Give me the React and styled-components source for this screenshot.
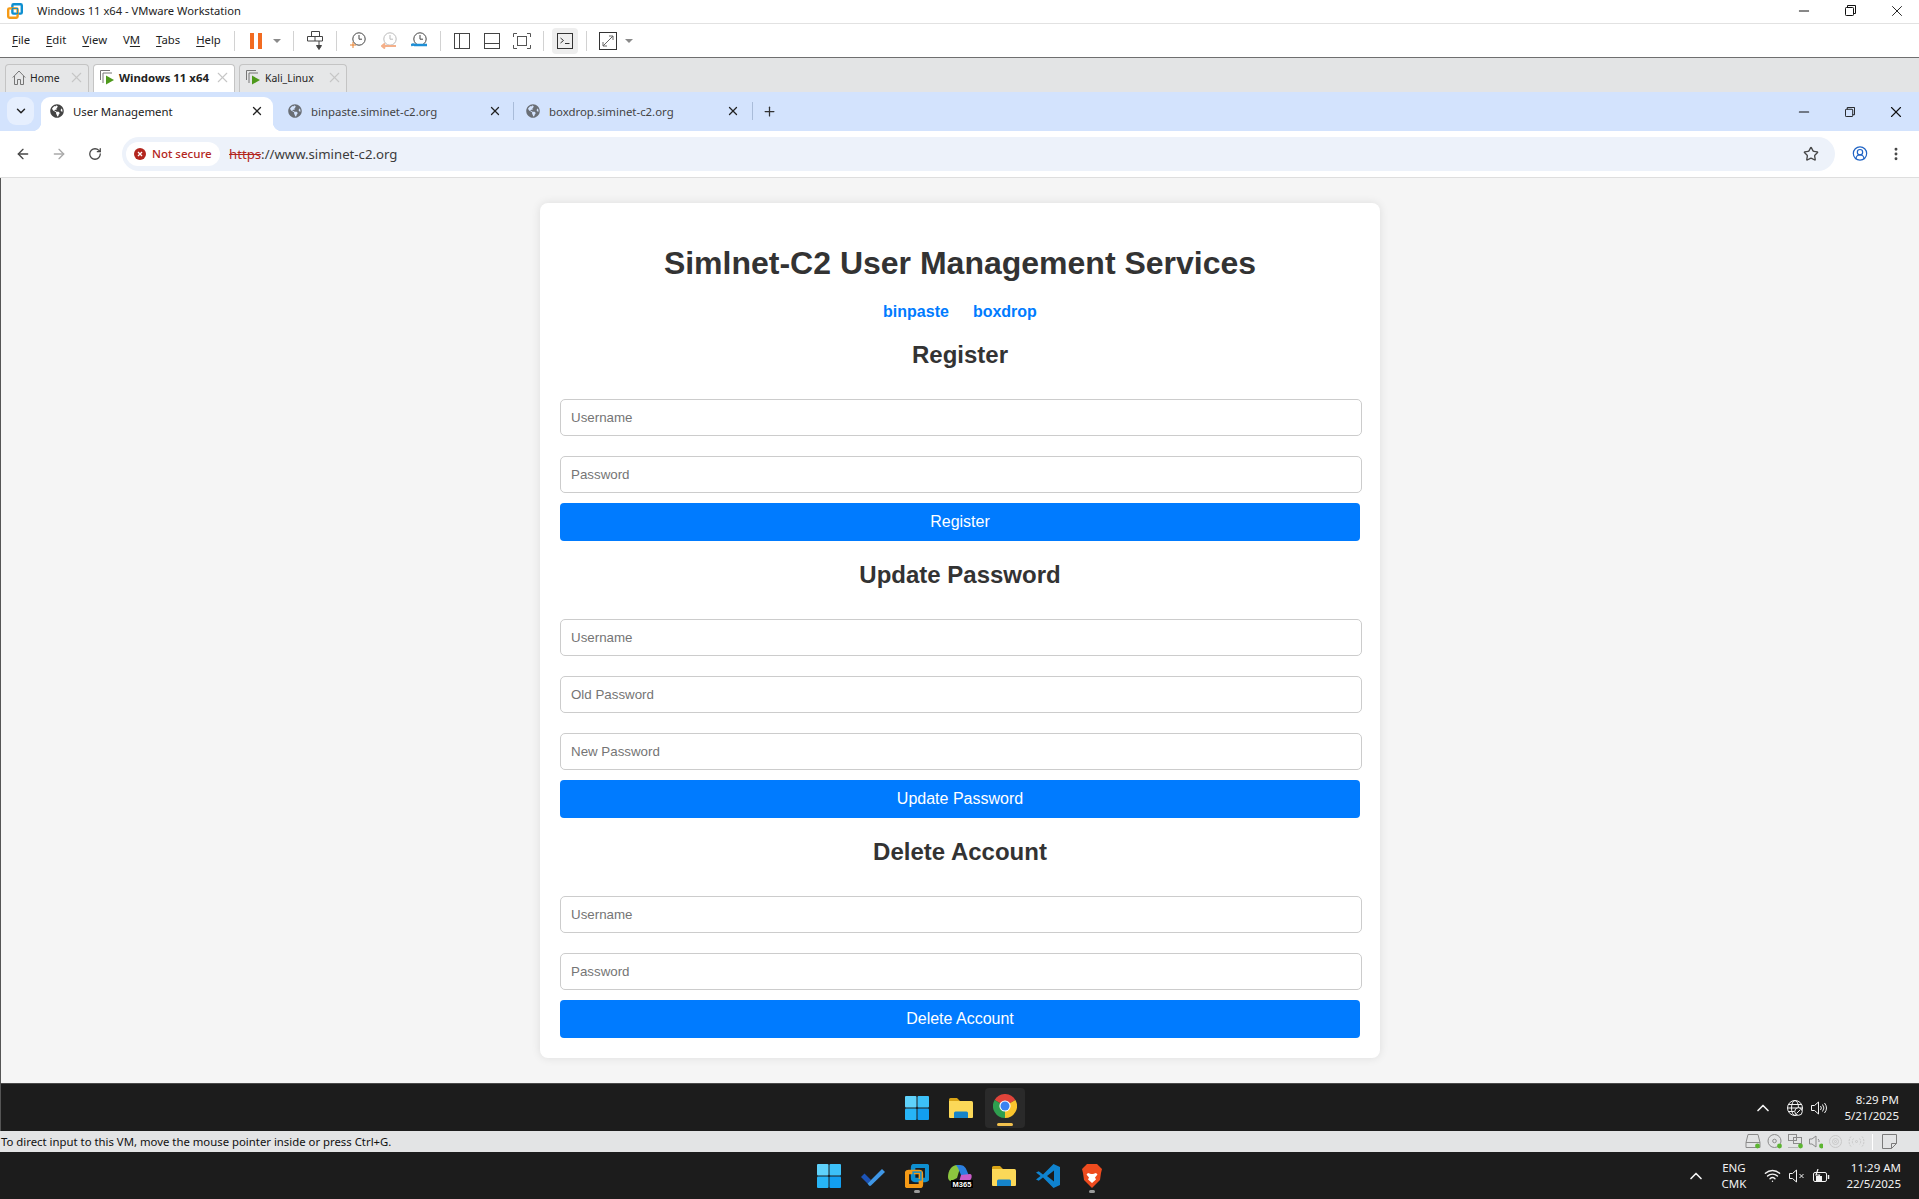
import React from 'react';
import styled, { createGlobalStyle } from 'styled-components';
import { ArrowLeft, ArrowRight, RotateCw, Star, X, Plus, ChevronDown, ChevronUp, CircleUserRound, MoreVertical, Wifi, Minus } from 'lucide-react';
import { FaGlobeAmericas } from 'react-icons/fa';

const UI_FONT = '"Noto Sans", "Open Sans", "Liberation Sans", sans-serif';
const WEB_FONT = '"Liberation Sans", Arial, sans-serif';

const GlobalStyle = createGlobalStyle`
  html, body { margin: 0; padding: 0; background: #fff; }
  * { box-sizing: border-box; }
  #root { width: 1919px; height: 1199px; overflow: hidden; }
`;

const Screen = styled.div`
  width: 1919px;
  height: 1199px;
  display: flex;
  flex-direction: column;
  font-family: ${UI_FONT};
  color: #1a1a1a;
`;

/* VMware window chrome */
const TitleBar = styled.div`
  height: 24px;
  flex: none;
  display: flex;
  align-items: center;
  padding: 0 0 2px 7px;
  border-bottom: 1px solid #e2e2e2;
  font-size: 11.2px;
`;
const TitleText = styled.span`
  margin-left: 14px;
  color: #222;
`;
const WinControls = styled.div`
  margin-left: auto;
  width: 123px;
  display: flex;
  align-items: center;
  justify-content: space-between;
  padding-right: 13px;
  color: ${p => p.$color || '#111'};
`;
const ChromeControls = styled(WinControls)`
  align-self: center;
  padding-right: 14px;
`;
const MenuBar = styled.div`
  height: 34px;
  flex: none;
  display: flex;
  align-items: center;
  border-bottom: 1px solid #6f6f6f;
  background: #fff;
`;
const MenuList = styled.div`
  width: 222px;
  padding: 0 0 2px 12px;
  display: flex;
  gap: 16px;
  font-size: 11.3px;
  color: #222;
  u { text-underline-offset: 2px; }
`;
const ToolSep = styled.span`
  width: 1px;
  height: 20px;
  background: #d2d2d2;
  margin-left: ${p => p.$ml}px;
`;
const Tool = styled.span`
  display: flex;
  align-items: center;
  justify-content: center;
  margin-left: ${p => p.$ml}px;
`;
const ActiveTool = styled(Tool)`
  width: 26px;
  height: 26px;
  background: #eeeeee;
  border-radius: 4px;
`;
const Caret = styled.span`
  width: 0;
  height: 0;
  margin-left: ${p => p.$ml}px;
  border-left: 4px solid transparent;
  border-right: 4px solid transparent;
  border-top: 4px solid #8a8a8a;
`;
const VmTabs = styled.div`
  height: 34px;
  flex: none;
  display: flex;
  align-items: flex-end;
  background: #e3e4e5;
  padding-left: 5px;
  gap: 4px;
`;
const VmTab = styled.div`
  height: 28px;
  width: ${p => p.$w}px;
  display: flex;
  align-items: center;
  padding: 0 3px 2px 6px;
  border: 1px solid #c4c4c4;
  border-bottom: none;
  border-radius: 4px 4px 0 0;
  background: ${p => (p.$active ? '#fff' : '#e6e7e8')};
  font-size: ${p => (p.$active ? 11.4 : 10.4)}px;
  font-weight: ${p => (p.$active ? 700 : 400)};
  color: #222;
`;
const VmTabLabel = styled.span`
  margin-left: 4px;
  white-space: nowrap;
`;
const VmTabClose = styled(X)`
  margin-left: auto;
  color: #c6c6c6;
`;

/* Chrome */
const ChromeStrip = styled.div`
  height: 39px;
  flex: none;
  display: flex;
  align-items: flex-end;
  background: #d3e3fd;
  color: #222;
`;
const SearchTabs = styled.div`
  width: 27px;
  height: 28px;
  margin: 0 7px 6px 7px;
  border-radius: 9px;
  background: #e6effe;
  display: flex;
  align-items: center;
  justify-content: center;
`;
const ChromeTab = styled.div`
  position: relative;
  height: 34px;
  width: ${p => p.$w}px;
  display: flex;
  align-items: center;
  padding: 0 ${p => p.$pr}px 6px ${p => p.$pl}px;
  font-size: 11.4px;
  color: ${p => (p.$active ? '#222' : '#444')};
  background: ${p => (p.$active ? '#fff' : 'transparent')};
  border-radius: 9px 9px 0 0;
  svg.favicon { color: ${p => (p.$active ? '#444' : '#6a6f76')}; flex: none; }
  ${p => p.$sep && `
    &::before, &::after {
      content: '';
      position: absolute;
      top: 5px;
      width: 1px;
      height: 18px;
      background: #a9bcd9;
    }
    &::before { left: 0; }
    &::after { right: 0; }
  `}
  ${p => p.$active && `
    &::before, &::after {
      content: '';
      position: absolute;
      bottom: 0;
      width: 9px;
      height: 9px;
    }
    &::before { left: -9px; background: radial-gradient(circle at 0 0, transparent 9px, #fff 9.5px); }
    &::after { right: -9px; background: radial-gradient(circle at 100% 0, transparent 9px, #fff 9.5px); }
  `}
`;
const ChromeTabLabel = styled.span`
  margin-left: 9px;
  white-space: nowrap;
`;
const ChromeTabClose = styled(X)`
  margin-left: auto;
  color: #222;
`;
const NewTab = styled(Plus)`
  margin: 0 0 12px 9px;
  color: #333;
`;
const AddressBar = styled.div`
  height: 47px;
  flex: none;
  display: flex;
  align-items: center;
  background: #fff;
  border-bottom: 1px solid #dedede;
  padding-bottom: 1px;
  color: #474747;
`;
const NavButton = styled.span`
  width: 16px;
  display: flex;
  justify-content: center;
  margin-left: ${p => p.$ml}px;
  color: ${p => p.$color || '#474747'};
`;
const Omnibox = styled.div`
  width: 1713px;
  height: 34px;
  margin-left: 19px;
  display: flex;
  align-items: center;
  padding-left: 4px;
  border-radius: 17px;
  background: #edf2fa;
  font-size: 13.2px;
`;
const SecurityChip = styled.div`
  width: 94px;
  height: 24px;
  display: flex;
  align-items: center;
  padding-left: 8px;
  gap: 6px;
  border-radius: 12px;
  background: #fff;
  color: #b3261e;
  font-size: 11.5px;
  font-weight: 500;
`;
const Url = styled.span`
  margin-left: 9px;
  color: #3c3c3c;
`;
const Scheme = styled.span`
  color: #b3261e;
  text-decoration: line-through;
`;
const OmniStar = styled(Star)`
  margin-left: auto;
  margin-right: 16px;
  color: #474747;
`;

/* The web page in the VM */
const Page = styled.main`
  flex: 1;
  min-height: 0;
  display: flex;
  align-items: center;
  justify-content: center;
  background: #f5f5f5;
  border-left: 1px solid #555;
  font-family: ${WEB_FONT};
`;
const Card = styled.div`
  width: 840px;
  padding: 20px;
  background: #fff;
  border-radius: 8px;
  box-shadow: 0 0 10px rgba(0, 0, 0, 0.1);
`;
const PageTitle = styled.h1`
  margin: 21.44px 0;
  font-size: 32px;
  line-height: 37px;
  text-align: center;
  color: #333;
`;
const LinkRow = styled.nav`
  display: flex;
  justify-content: center;
  gap: 24px;
  line-height: 18px;
`;
const PageLink = styled.a`
  color: #007bff;
  font-size: 16px;
  font-weight: 700;
  text-decoration: none;
`;
const FormSection = styled.section`
  display: flex;
  flex-direction: column;
`;
const SectionTitle = styled.h2`
  margin: 19.92px 0;
  font-size: 24px;
  line-height: 28px;
  text-align: center;
  color: #333;
`;
const Field = styled.input`
  display: block;
  flex: none;
  width: 802px;
  height: 37px;
  margin: 10px 0;
  padding: 10px;
  border: 1px solid #ccc;
  border-radius: 5px;
  font-family: ${WEB_FONT};
  font-size: 13.33px;
  background: #fff;
  &::placeholder { color: #757575; opacity: 1; }
`;
const SubmitButton = styled.button`
  display: block;
  flex: none;
  width: 100%;
  height: 38px;
  padding: 0;
  border: none;
  border-radius: 4px;
  background: #007bff;
  color: #fff;
  font-family: ${WEB_FONT};
  font-size: 16px;
`;

/* Taskbars */
const Taskbar = styled.div`
  height: ${p => p.$h}px;
  flex: none;
  display: flex;
  align-items: center;
  background: #1c1c1c;
  color: #f2f2f2;
  border-top: ${p => (p.$guest ? '1px solid #4a4a4a' : 'none')};
  border-left: ${p => (p.$guest ? '1px solid #555' : 'none')};
`;
const Apps = styled.div`
  margin-left: ${p => p.$ml}px;
  display: flex;
  align-items: center;
`;
const App = styled.span`
  position: relative;
  display: flex;
  align-items: center;
  justify-content: center;
  margin-left: ${p => p.$ml || 0}px;
  ${p => p.$running && `
    &::after {
      content: '';
      position: absolute;
      left: 50%;
      bottom: -5px;
      width: 6px;
      height: 3px;
      margin-left: -3px;
      border-radius: 2px;
      background: #9a9a9a;
    }
  `}
`;
const ActiveApp = styled.span`
  position: relative;
  width: 40px;
  height: 40px;
  margin-left: 12px;
  display: flex;
  align-items: center;
  justify-content: center;
  padding-bottom: 4px;
  background: #2a2a2a;
  border-radius: 4px;
  &::after {
    content: '';
    position: absolute;
    left: 12px;
    bottom: 2px;
    width: 16px;
    height: 3px;
    border-radius: 2px;
    background: #f2c14e;
  }
`;
const Tray = styled.div`
  margin-left: auto;
  display: flex;
  align-items: center;
  padding-right: ${p => p.$pr}px;
`;
const TrayItem = styled.span`
  display: flex;
  align-items: center;
  margin-left: ${p => p.$ml}px;
`;
const ClockText = styled.div`
  margin-left: ${p => p.$ml}px;
  text-align: right;
  font-size: 11.5px;
  line-height: 16px;
  white-space: nowrap;
`;
const LangText = styled(ClockText)`
  text-align: center;
`;
const StatusBar = styled.div`
  height: 21px;
  flex: none;
  display: flex;
  align-items: center;
  padding-left: 1px;
  background: #e3e4e5;
  font-size: 11.35px;
  color: #111;
`;
const StatusIcons = styled.div`
  margin-left: auto;
  padding-right: 22px;
  display: flex;
  align-items: center;
  gap: 6px;
`;
const StatusSep = styled.span`
  width: 1px;
  height: 16px;
  background: #fff;
  margin: 0 3px 0 1px;
`;

/* Drawn icons */
const VmwareLogo = ({ size = 16, stroke = 2.4 }) => (
  <svg width={size} height={size} viewBox="0 0 16 16" fill="none">
    <rect x="5.4" y="1.2" width="9.4" height="9.4" rx="1.2" stroke="#0e8fd0" strokeWidth={stroke} />
    <rect x="1.2" y="5.4" width="9.4" height="9.4" rx="1.2" stroke="#f59a16" strokeWidth={stroke} />
    <rect x="5.4" y="5.4" width="5.2" height="5.2" stroke="#0e8fd0" strokeWidth="1" />
  </svg>
);
const PauseIcon = () => (
  <svg width="12" height="16" viewBox="0 0 12 16"><rect width="4" height="16" fill="#f26b21" /><rect x="8" width="4" height="16" fill="#f26b21" /></svg>
);
const SendKeysIcon = () => (
  <svg width="16" height="19" viewBox="0 0 16 19" fill="none" stroke="#444">
    <path d="M4.5 .5h8v5h-8zM.5 5.500h15v4.500H.5zM8 5.500V10" />
    <path d="M12 10v5" />
    <path d="M14.500 14.500 12 18.500 9.500 14.500z" fill="#444" />
  </svg>
);
const ClockBase = ({ accent, dim }) => (
  <svg width="16" height="17" viewBox="0 0 16 17" fill="none" stroke={dim ? '#bbb' : '#444'}>
    <circle cx="9" cy="7" r="6.200" />
    <path d="M9 3v4.200h3" />
    {accent}
  </svg>
);
const LayoutIcon = ({ d }) => (
  <svg width="16" height="16" viewBox="0 0 16 16" fill="none" stroke="#444">
    <rect x=".5" y=".5" width="15" height="15" />
    <path d={d} />
  </svg>
);
const FocusIcon = () => (
  <svg width="18" height="16" viewBox="0 0 18 16" fill="none" stroke="#555">
    <path d="M.5 4V.5H4M14 .5h3.500V4M17.500 12v3.500H14M4 15.500H.5V12" />
    <rect x="4.500" y="3.500" width="9" height="9" />
  </svg>
);
const TerminalIcon = () => (
  <svg width="16" height="16" viewBox="0 0 16 16" fill="none" stroke="#333">
    <rect x=".5" y=".5" width="15" height="15" />
    <path d="M3.500 5 6.500 7.500 3.500 10M8 10.500h4.500" />
  </svg>
);
const StretchIcon = () => (
  <svg width="18" height="18" viewBox="0 0 18 18" fill="none" stroke="#333">
    <rect x=".5" y=".5" width="17" height="17" />
    <path d="M4 14 14 4M10 4h4v4M4 10v4h4" stroke="#666" />
  </svg>
);
const HomeIcon = () => (
  <svg width="14" height="15" viewBox="0 0 14 15" fill="none" stroke="#777">
    <path d="M.8 7.500 7 1l6.200 6.500M2.500 6v8.500h3v-5h3v5h3V6" />
  </svg>
);
const VmRunIcon = () => (
  <svg width="15" height="15" viewBox="0 0 15 15" fill="none">
    <path d="M.5 10V.5H10" stroke="#777" />
    <path d="M3 13V3h9" stroke="#777" />
    <path d="M6 5.500 14 10 6 14.500z" fill="#4e9a1c" />
  </svg>
);
const RestoreIcon = ({ size = 11 }) => (
  <svg width={size} height={size} viewBox="0 0 11 11" fill="none" stroke="currentColor">
    <rect x=".5" y="2.500" width="8" height="8" rx=".8" />
    <path d="M2.500 2.500V.5h8v8H8.500" />
  </svg>
);
const InsecureIcon = () => (
  <svg width="12" height="12" viewBox="0 0 12 12">
    <circle cx="6" cy="6" r="6" fill="#b3261e" />
    <path d="M4 4l4 4M8 4 4 8" stroke="#fff" strokeWidth="1.300" />
  </svg>
);
const WindowsLogo = () => (
  <svg width="24" height="24" viewBox="0 0 24 24">
    <rect x="0" y="0" width="11.500" height="11.500" rx="1" fill="#5fd2fb" />
    <rect x="12.500" y="0" width="11.500" height="11.500" rx="1" fill="#3cc0f8" />
    <rect x="0" y="12.500" width="11.500" height="11.500" rx="1" fill="#27b4f6" />
    <rect x="12.500" y="12.500" width="11.500" height="11.500" rx="1" fill="#129ef0" />
  </svg>
);
const FolderLogo = () => (
  <svg width="24" height="22" viewBox="0 0 24 22">
    <path d="M0 2.500A1.500 1.500 0 0 1 1.500 1H8l3 3h-11z" fill="#d9a416" />
    <path d="M0 4h22.500A1.500 1.500 0 0 1 24 5.500V20a1 1 0 0 1-1 1H1a1 1 0 0 1-1-1z" fill="#fbd858" />
    <path d="M5 21v-5a1.500 1.500 0 0 1 1.500-1.500h11A1.500 1.500 0 0 1 19 16v5z" fill="#1583c9" />
  </svg>
);
const ChromeLogo = () => (
  <svg width="24" height="24" viewBox="0 0 24 24">
    <path d="M12 12 1.600 6A12 12 0 0 1 22.400 6z" fill="#e0443a" />
    <path d="M12 12 22.400 6A12 12 0 0 1 12 24z" fill="#fbc52d" />
    <path d="M12 12 12 24A12 12 0 0 1 1.600 6z" fill="#2f9e4f" />
    <circle cx="12" cy="12" r="5.600" fill="#fff" />
    <circle cx="12" cy="12" r="4.500" fill="#3b82f0" />
  </svg>
);
const TodoLogo = () => (
  <svg width="24" height="20" viewBox="0 0 24 20">
    <path d="M0 11 3.500 7.500 10 14l-3.500 3.500z" fill="#1c54b8" />
    <path d="M6.500 17.500 21 3l3 3-14 13.500a1.500 1.500 0 0 1-2 0z" fill="#3f97e6" />
  </svg>
);
const M365Logo = () => (
  <svg width="26" height="24" viewBox="0 0 26 24">
    <path d="M1 13C1 6 5 1 10 1c2 0 3 1 3 3L10 14c-2 1-4 2-6 3-2 0-3-2-3-4z" fill="#8cc63f" />
    <path d="M9 1h4c4 0 6 3 7 6l2 5-8-1-3-7z" fill="#2b7fe0" />
    <path d="M14 11l9-1c2 0 2 3 1 5-1 2-3 3-5 3h-7z" fill="#c85cc9" />
    <rect x="4" y="16" width="22" height="8" fill="#000" />
    <text x="15" y="22.800" textAnchor="middle" fontSize="7.500" fontWeight="700" fill="#fff" fontFamily={WEB_FONT}>M365</text>
  </svg>
);
const VsCodeLogo = () => (
  <svg width="24" height="24" viewBox="0 0 24 24">
    <path d="M17.500 0 24 3v18l-6.500 3L7 13.500l-4.300 3.300L0 15.500 4.500 12 0 8.500l2.700-1.300L7 10.500zM18 6.500 11 12l7 5.500z" fill="#0f83cf" />
  </svg>
);
const BraveLogo = () => (
  <svg width="20" height="24" viewBox="0 0 20 24">
    <path d="M5 0h10l2.500 2.500L20 5l-1 4-1 7-8 8-8-8-1-7-1-4 2.500-2.500z" fill="#ee4b1e" />
    <path d="M6 9l3 1h2l3-1 1.500 1.500L13 13.500l1 2-4 3.500-4-3.500 1-2-2.500-3z" fill="#fff" />
  </svg>
);
const TrayGlobe = () => (
  <svg width="16" height="16" viewBox="0 0 16 16" fill="none" stroke="#f2f2f2">
    <circle cx="8" cy="8" r="7.500" />
    <ellipse cx="8" cy="8" rx="3.500" ry="7.500" />
    <path d="M.5 8h15M1.500 4.500h13M1.500 11.500h6" />
    <circle cx="11.500" cy="11.500" r="3.800" fill="#1c1c1c" />
    <path d="M9.500 13.500l4-4" />
  </svg>
);
const SpeakerIcon = ({ waves }) => (
  <svg width="16" height="14" viewBox="0 0 16 14" fill="none" stroke="#f2f2f2">
    <path d="M.5 4.500h3L7.500 1v12l-4-3.500h-3z" />
    {waves ? (
      <path d="M9.500 5a3 3 0 0 1 0 4M11.500 3.500a5.500 5.500 0 0 1 0 7M13.500 2a8 8 0 0 1 0 10" />
    ) : (
      <path d="M10.500 5l4 4M14.500 5l-4 4" />
    )}
  </svg>
);
const BatteryIcon = () => (
  <svg width="17" height="14" viewBox="0 0 17 14" fill="none" stroke="#f2f2f2">
    <rect x=".5" y="3.500" width="13" height="9" rx="1.500" />
    <path d="M15.500 6v4" strokeWidth="1.500" />
    <path d="M3 12V7h6v5z" fill="#f2f2f2" stroke="none" />
    <path d="M5 0 3 6h3.500L5 10" strokeWidth="1.200" />
  </svg>
);

const Dot = () => <circle cx="12.500" cy="12" r="2.400" fill="#5cb531" stroke="none" />;
const StatusHdd = () => (
  <svg width="16" height="15" viewBox="0 0 16 15" fill="none" stroke="#8b8b8b">
    <path d="M3 .5h10l2 8v5H1v-5zM1 8.500h14" /><Dot />
  </svg>
);
const StatusCd = () => (
  <svg width="15" height="15" viewBox="0 0 15 15" fill="none" stroke="#8b8b8b">
    <circle cx="7.500" cy="7" r="6.500" /><circle cx="7.500" cy="7" r="1.800" /><Dot />
  </svg>
);
const StatusNet = () => (
  <svg width="15" height="15" viewBox="0 0 15 15" fill="none" stroke="#8b8b8b">
    <rect x=".5" y=".5" width="8" height="6" /><rect x="5.500" y="3.500" width="8" height="6" /><path d="M.5 13.500h9" strokeDasharray="1 1" /><Dot />
  </svg>
);
const StatusSound = () => (
  <svg width="14" height="15" viewBox="0 0 14 15" fill="none" stroke="#8b8b8b">
    <path d="M.5 5h2.500L7 2v11L3 10H.5z" /><path d="M9 5a3 3 0 0 1 1 3" /><Dot />
  </svg>
);
const StatusDisc = () => (
  <svg width="13" height="15" viewBox="0 0 13 15" fill="none" stroke="#c8c8c8">
    <circle cx="6.500" cy="7.500" r="6" /><circle cx="6.500" cy="7.500" r="3" /><circle cx="6.500" cy="7.500" r="1" />
  </svg>
);
const StatusRadio = () => (
  <svg width="17" height="15" viewBox="0 0 17 15" fill="none" stroke="#c8c8c8">
    <circle cx="8.500" cy="7.500" r="1" /><path d="M5.500 4.500a4.500 4.500 0 0 0 0 6M11.500 4.500a4.500 4.500 0 0 1 0 6M3 2.500a7.500 7.500 0 0 0 0 10M14 2.500a7.500 7.500 0 0 1 0 10" strokeDasharray="2 1" />
  </svg>
);
const StatusNote = () => (
  <svg width="15" height="15" viewBox="0 0 15 15" fill="none" stroke="#7a7a7a">
    <path d="M.5.500h14v9l-5 5h-9zM14.500 9.500h-5v5" />
  </svg>
);

const forms = [
  { title: 'Register', fields: ['Username', 'Password'] },
  { title: 'Update Password', fields: ['Username', 'Old Password', 'New Password'] },
  { title: 'Delete Account', fields: ['Username', 'Password'] },
];

const menus = [['F', 'ile'], ['E', 'dit'], ['V', 'iew'], ['V', 'M'], ['T', 'abs'], ['H', 'elp']];

const App_ = () => (
  <Screen>
    <GlobalStyle />
    <TitleBar>
      <VmwareLogo />
      <TitleText>Windows 11 x64 - VMware Workstation</TitleText>
      <WinControls>
        <Minus size={16} strokeWidth={1.5} />
        <RestoreIcon />
        <X size={18} strokeWidth={1.2} />
      </WinControls>
    </TitleBar>

    <MenuBar>
      <MenuList>
        {menus.map(([first, rest], i) =>
          first === 'V' && rest === 'M' ? (
            <span key={i}>V<u>M</u></span>
          ) : (
            <span key={i}><u>{first}</u>{rest}</span>
          )
        )}
      </MenuList>
      <ToolSep $ml={12} />
      <Tool $ml={15}><PauseIcon /></Tool>
      <Caret $ml={11} />
      <ToolSep $ml={12} />
      <Tool $ml={13}><SendKeysIcon /></Tool>
      <ToolSep $ml={13} />
      <Tool $ml={13}>
        <ClockBase accent={<path d="M3 10v6M0 13h6" stroke="#e8802c" />} />
      </Tool>
      <Tool $ml={15}>
        <ClockBase dim accent={<path d="M1 14h14M4 11.500 1 14l3 2.500" stroke="#f4b08a" strokeWidth="2" />} />
      </Tool>
      <Tool $ml={14}>
        <ClockBase accent={<path d="M0 13.500c2-2 3-.5 4-.5h12" stroke="#1f8fd6" strokeWidth="2.500" />} />
      </Tool>
      <ToolSep $ml={13} />
      <Tool $ml={13}><LayoutIcon d="M5.500 0v16" /></Tool>
      <Tool $ml={14}><LayoutIcon d="M0 10.500h16" /></Tool>
      <Tool $ml={13}><FocusIcon /></Tool>
      <ToolSep $ml={12} />
      <ActiveTool $ml={8}><TerminalIcon /></ActiveTool>
      <ToolSep $ml={8} />
      <Tool $ml={12}><StretchIcon /></Tool>
      <Caret $ml={8} />
    </MenuBar>

    <VmTabs>
      <VmTab $w={84}>
        <HomeIcon />
        <VmTabLabel>Home</VmTabLabel>
        <VmTabClose size={17} strokeWidth={1.5} />
      </VmTab>
      <VmTab $w={142} $active>
        <VmRunIcon />
        <VmTabLabel>Windows 11 x64</VmTabLabel>
        <VmTabClose size={17} strokeWidth={1.5} />
      </VmTab>
      <VmTab $w={108}>
        <VmRunIcon />
        <VmTabLabel>Kali_Linux</VmTabLabel>
        <VmTabClose size={17} strokeWidth={1.5} />
      </VmTab>
    </VmTabs>

    <ChromeStrip>
      <SearchTabs><ChevronDown size={14} strokeWidth={2.5} /></SearchTabs>
      <ChromeTab $w={232} $pl={9} $pr={9} $active>
        <FaGlobeAmericas className="favicon" size={14} />
        <ChromeTabLabel>User Management</ChromeTabLabel>
        <ChromeTabClose size={14} strokeWidth={2.2} />
      </ChromeTab>
      <ChromeTab $w={240} $pl={15} $pr={11}>
        <FaGlobeAmericas className="favicon" size={14} />
        <ChromeTabLabel>binpaste.siminet-c2.org</ChromeTabLabel>
        <ChromeTabClose size={14} strokeWidth={2.2} />
      </ChromeTab>
      <ChromeTab $w={240} $pl={13} $pr={13} $sep>
        <FaGlobeAmericas className="favicon" size={14} />
        <ChromeTabLabel>boxdrop.siminet-c2.org</ChromeTabLabel>
        <ChromeTabClose size={14} strokeWidth={2.2} />
      </ChromeTab>
      <NewTab size={15} strokeWidth={2} />
      <ChromeControls>
        <Minus size={16} strokeWidth={1.6} />
        <RestoreIcon size={10} />
        <X size={18} strokeWidth={1.5} />
      </ChromeControls>
    </ChromeStrip>

    <AddressBar>
      <NavButton $ml={15}><ArrowLeft size={16} strokeWidth={2} /></NavButton>
      <NavButton $ml={20} $color="#a9a9a9"><ArrowRight size={16} strokeWidth={2} /></NavButton>
      <NavButton $ml={20}><RotateCw size={14} strokeWidth={2.2} /></NavButton>
      <Omnibox>
        <SecurityChip><InsecureIcon />Not secure</SecurityChip>
        <Url><Scheme>https</Scheme>://www.siminet-c2.org</Url>
        <OmniStar size={16} strokeWidth={2} />
      </Omnibox>
      <NavButton $ml={17} $color="#1f63c4"><CircleUserRound size={17} strokeWidth={1.8} /></NavButton>
      <NavButton $ml={20}><MoreVertical size={16} strokeWidth={2.4} /></NavButton>
    </AddressBar>

    <Page>
      <Card>
        <PageTitle>Simlnet-C2 User Management Services</PageTitle>
        <LinkRow>
          <PageLink href="#binpaste">binpaste</PageLink>
          <PageLink href="#boxdrop">boxdrop</PageLink>
        </LinkRow>
        {forms.map(form => (
          <FormSection key={form.title}>
            <SectionTitle>{form.title}</SectionTitle>
            {form.fields.map(name => (
              <Field key={name} placeholder={name} aria-label={name} />
            ))}
            <SubmitButton type="button">{form.title}</SubmitButton>
          </FormSection>
        ))}
      </Card>
    </Page>

    <Taskbar $h={48} $guest>
      <Apps $ml={904}>
        <App><WindowsLogo /></App>
        <App $ml={20}><FolderLogo /></App>
        <ActiveApp><ChromeLogo /></ActiveApp>
      </Apps>
      <Tray $pr={20}>
        <TrayItem $ml={0}><ChevronUp size={20} strokeWidth={2} /></TrayItem>
        <TrayItem $ml={14}><TrayGlobe /></TrayItem>
        <TrayItem $ml={8}><SpeakerIcon waves /></TrayItem>
        <ClockText $ml={17}>8:29 PM<br />5/21/2025</ClockText>
      </Tray>
    </Taskbar>

    <StatusBar>
      To direct input to this VM, move the mouse pointer inside or press Ctrl+G.
      <StatusIcons>
        <StatusHdd />
        <StatusCd />
        <StatusNet />
        <StatusSound />
        <StatusDisc />
        <StatusRadio />
        <StatusSep />
        <StatusNote />
      </StatusIcons>
    </StatusBar>

    <Taskbar $h={47}>
      <Apps $ml={817}>
        <App><WindowsLogo /></App>
        <App $ml={20}><TodoLogo /></App>
        <App $ml={20} $running><VmwareLogo size={24} stroke={3} /></App>
        <App $ml={18}><M365Logo /></App>
        <App $ml={19}><FolderLogo /></App>
        <App $ml={20}><VsCodeLogo /></App>
        <App $ml={22} $running><BraveLogo /></App>
      </Apps>
      <Tray $pr={18}>
        <TrayItem $ml={0}><ChevronUp size={20} strokeWidth={2} /></TrayItem>
        <LangText $ml={16}>ENG<br />CMK</LangText>
        <TrayItem $ml={18}><Wifi size={17} strokeWidth={2} /></TrayItem>
        <TrayItem $ml={8}><SpeakerIcon /></TrayItem>
        <TrayItem $ml={8}><BatteryIcon /></TrayItem>
        <ClockText $ml={16}>11:29 AM<br />22/5/2025</ClockText>
      </Tray>
    </Taskbar>
  </Screen>
);

export default App_;
